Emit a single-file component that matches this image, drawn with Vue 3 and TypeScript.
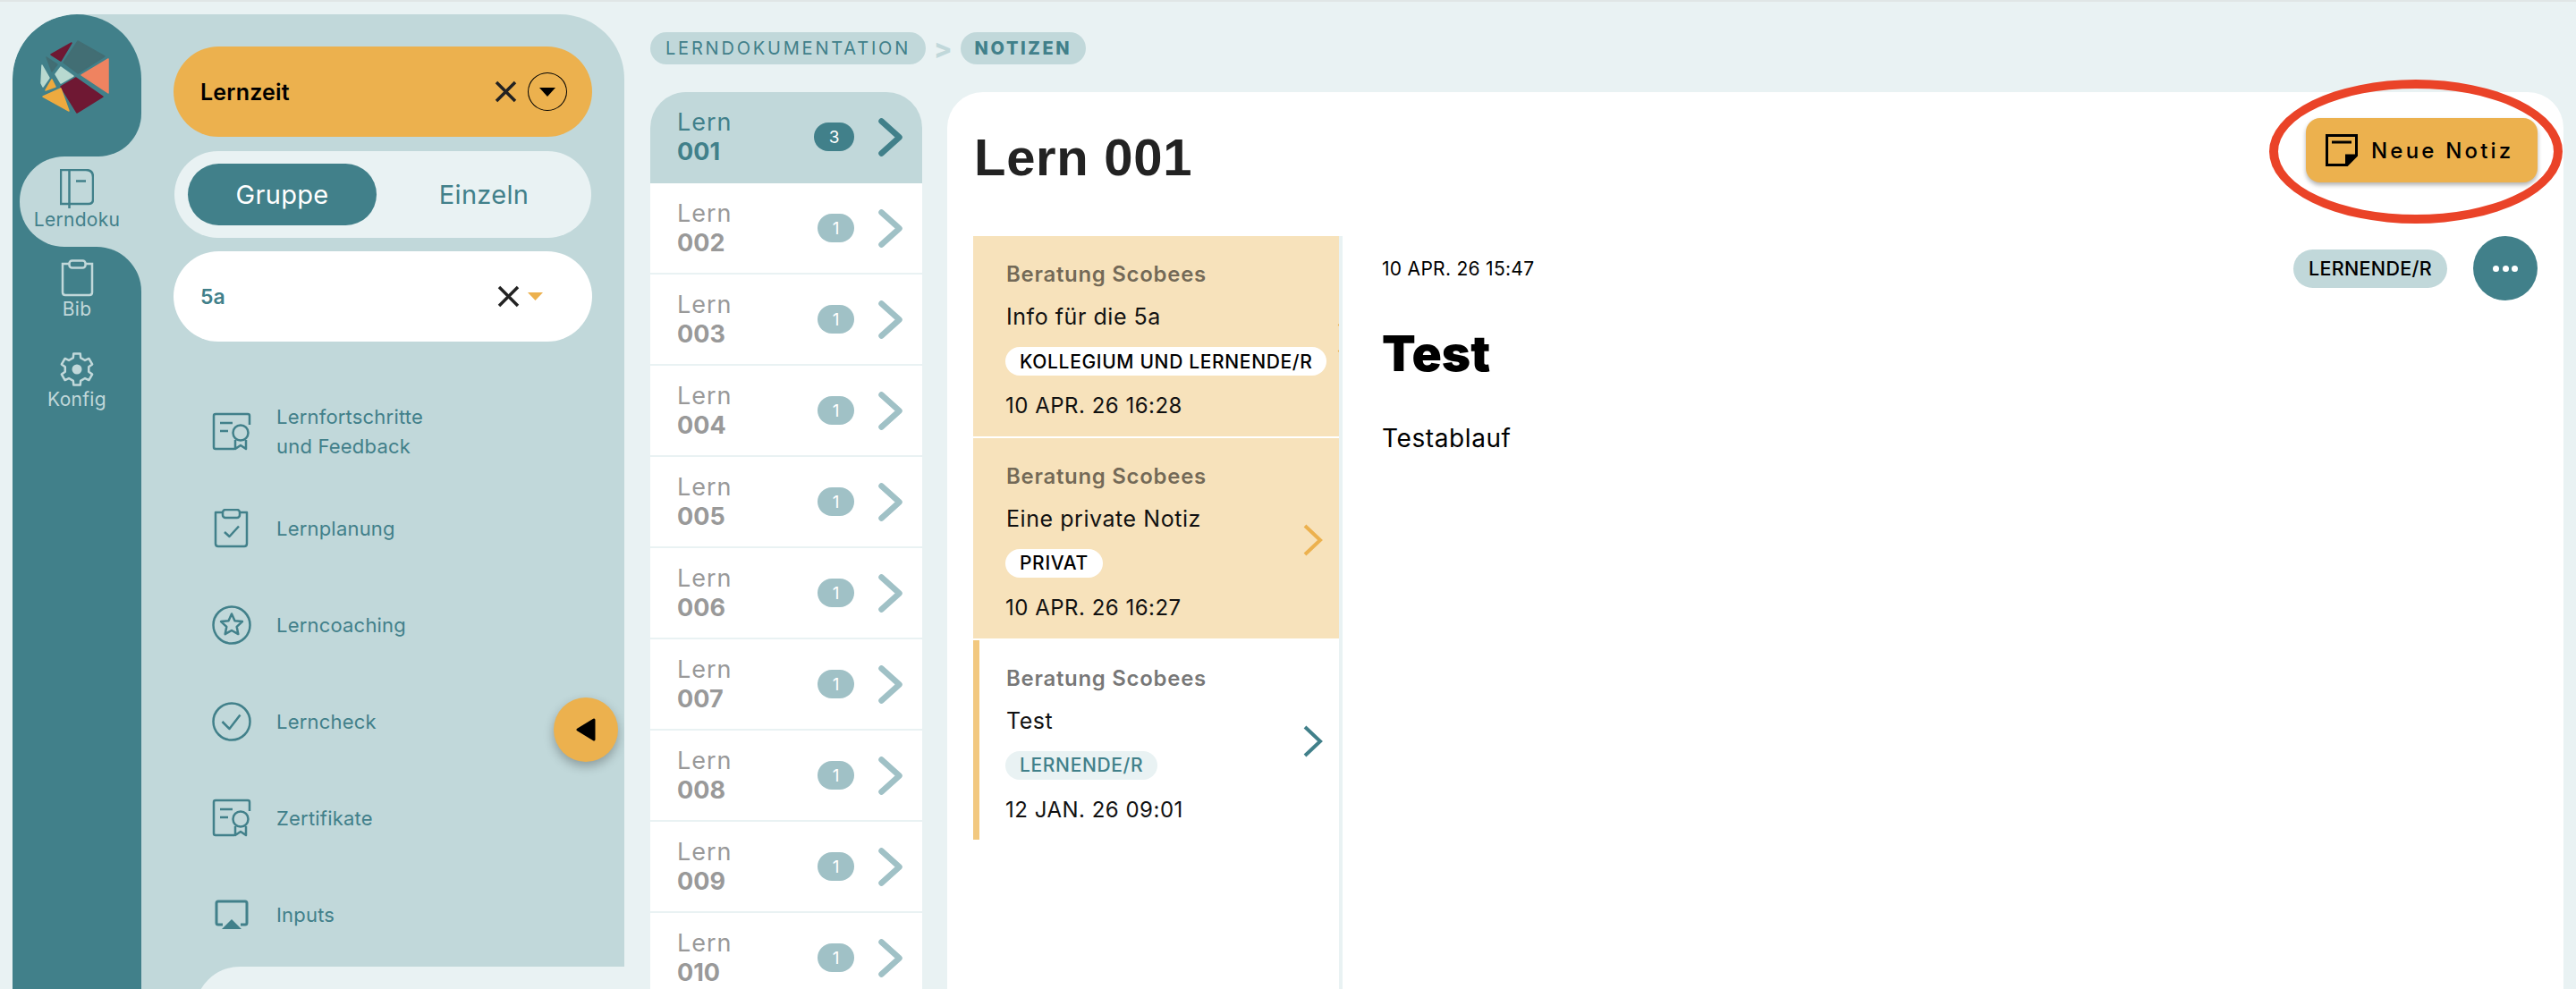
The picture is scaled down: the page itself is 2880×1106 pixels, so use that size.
<script setup lang="ts">
const navItems = [
  { label: ['Lernfortschritte', 'und Feedback'], icon: 'cert' },
  { label: ['Lernplanung'], icon: 'clip' },
  { label: ['Lerncoaching'], icon: 'star' },
  { label: ['Lerncheck'], icon: 'check' },
  { label: ['Zertifikate'], icon: 'cert' },
  { label: ['Inputs'], icon: 'air' },
]
const lessons = ['001', '002', '003', '004', '005', '006', '007', '008', '009', '010'].map((n, i) => ({
  n,
  count: i === 0 ? 3 : 1,
  active: i === 0,
}))
const notes = [
  { title: 'Info für die 5a', tag: 'KOLLEGIUM UND LERNENDE/R', date: '10 APR. 26 16:28', kind: 'warm' },
  { title: 'Eine private Notiz', tag: 'PRIVAT', date: '10 APR. 26 16:27', kind: 'warm' },
  { title: 'Test', tag: 'LERNENDE/R', date: '12 JAN. 26 09:01', kind: 'plain' },
]
function gearPath(cx: number, cy: number, ro: number, ri: number, teeth: number): string {
  const pts: string[] = []
  const step = (Math.PI * 2) / teeth
  for (let i = 0; i < teeth; i++) {
    const a = -Math.PI / 2 + i * step
    const w = step * 0.2
    const v = step * 0.3
    const p: [number, number][] = [
      [a - v, ri], [a - w, ro], [a + w, ro], [a + v, ri],
    ]
    for (const [t, r] of p) pts.push(`${(cx + r * Math.cos(t)).toFixed(2)} ${(cy + r * Math.sin(t)).toFixed(2)}`)
  }
  return 'M' + pts.join(' L') + ' Z'
}
const gear = gearPath(19, 19, 18, 13.5, 6)
</script>

<template>
  <div class="page">
    <aside class="panel">
      <div class="rail">
        <div class="logo-cell">
          <div class="logo-block">
            <svg class="logo" viewBox="40 40 90 92" width="90" height="92">
              <g stroke-linejoin="round" stroke-width="1.5">
                <polygon points="87,46 117,63 87,82 71,70" fill="#426e74" stroke="#426e74" />
                <polygon points="121,66 121,104 91,84" fill="#ef8360" stroke="#ef8360" />
                <polygon points="85,87 115,108 86,126 68,97" fill="#6f1833" stroke="#6f1833" />
                <polygon points="80,48 68,68 57,61" fill="#6f1833" stroke="#6f1833" />
                <polygon points="52,64 64,72 58,80" fill="#426e74" stroke="#426e74" />
                <polygon points="68,75 82,85 68,93 62,83" fill="#b8d9d0" stroke="#b8d9d0" />
                <polygon points="47,73 55,87 48,97 46,93" fill="#b8d9d0" stroke="#b8d9d0" />
                <polygon points="58,89 62,97 51,101" fill="#eeaa3f" stroke="#eeaa3f" />
                <polygon points="68,99 77,124 48,108" fill="#eeaa3f" stroke="#eeaa3f" />
              </g>
            </svg>
          </div>
        </div>
        <div class="tab-cell">
          <div class="tab active">
            <svg width="38" height="44" viewBox="0 0 38 44" fill="none" stroke="#41808a" stroke-width="2.5">
              <path d="M1 1 H29 Q37 1 37 9 V34 Q37 39 32 39 H1 Z" />
              <path d="M10.5 1 V44" />
              <path d="M18 13.5 H29" />
            </svg>
            <span>Lerndoku</span>
          </div>
        </div>
        <div class="rail-rest">
          <div class="tab">
            <svg width="37" height="42" viewBox="0 0 37 42" fill="none" stroke="#c1d8da" stroke-width="2.5">
              <path d="M9 5 H2 V37 Q2 40 5 40 H32 Q35 40 35 37 V5 H28" />
              <rect x="9.5" y="1.5" width="18" height="8" rx="3" />
            </svg>
            <span>Bib</span>
          </div>
          <div class="tab">
            <svg width="38" height="38" viewBox="0 0 38 38" fill="none" stroke="#c1d8da" stroke-width="2.5" stroke-linejoin="round">
              <path :d="gear" />
              <circle cx="19" cy="19" r="5.5" fill="#c1d8da" stroke="none" />
            </svg>
            <span>Konfig</span>
          </div>
        </div>
      </div>

      <div class="side">
        <div class="controls">
          <div class="select select-orange">
            <span class="select-label">Lernzeit</span>
            <svg class="x" width="25" height="25" viewBox="0 0 25 25"><path d="M2 2 L23 23 M23 2 L2 23" stroke="#222" stroke-width="3.5" /></svg>
            <span class="circle-btn">
              <svg width="18" height="10" viewBox="0 0 18 10"><path d="M0 0 H18 L9 10 Z" fill="#000" /></svg>
            </span>
          </div>
          <div class="toggle">
            <span class="toggle-opt on">Gruppe</span>
            <span class="toggle-opt">Einzeln</span>
          </div>
          <div class="select select-white">
            <span class="select-label teal">5a</span>
            <svg class="x" width="25" height="25" viewBox="0 0 25 25"><path d="M2 2 L23 23 M23 2 L2 23" stroke="#222" stroke-width="3.5" /></svg>
            <svg class="caret" width="17" height="9" viewBox="0 0 17 9"><path d="M0 0 H17 L8.5 9 Z" fill="#ecb14e" /></svg>
          </div>
        </div>

        <nav class="nav">
          <div v-for="item in navItems" :key="item.label[0]" class="nav-row">
            <svg class="nav-icon" width="44" height="44" viewBox="0 0 44 44" fill="none" stroke="#41808a" stroke-width="2.5" stroke-linejoin="round">
              <template v-if="item.icon === 'cert'">
                <path d="M42 14 V4 Q42 2 40 2 H4 Q2 2 2 4 V39 Q2 41 4 41 H25" />
                <path d="M9 12 H23 M9 21 H18" />
                <circle cx="32" cy="23" r="8.5" />
                <path d="M26 31 V41 L32 37 L38 41 V31" />
              </template>
              <template v-else-if="item.icon === 'clip'">
                <path d="M12 4 H4 V39 Q4 42 7 42 H36 Q39 42 39 39 V4 H31" />
                <rect x="12" y="1" width="19" height="9" rx="3" />
                <path d="M14 26 L19.5 31 L30 19.5" />
              </template>
              <template v-else-if="item.icon === 'star'">
                <circle cx="22" cy="22" r="20.5" />
                <polygon points="22,9.5 25.5,17.2 33.9,18.1 27.7,23.9 29.3,32.1 22,28 14.7,32.1 16.3,23.9 10.1,18.1 18.5,17.2" />
              </template>
              <template v-else-if="item.icon === 'check'">
                <circle cx="22" cy="22" r="20.5" />
                <path d="M11.5 22 L19.5 30 L31.5 14.5" />
              </template>
              <template v-else>
                <path d="M12 33 H7 Q5 33 5 31 V9 Q5 7 7 7 H37 Q39 7 39 9 V31 Q39 33 37 33 H32" stroke-width="3" />
                <path d="M11 38 L22 27 L33 38 Z" fill="#41808a" stroke="none" />
              </template>
            </svg>
            <span class="nav-text"><span v-for="l in item.label" :key="l" class="nav-line">{{ l }}</span></span>
          </div>
        </nav>
        <div class="subpanel"></div>
      </div>

      <button class="collapse" type="button">
        <svg width="22" height="26" viewBox="0 0 22 26"><path d="M20 2 V24 L2 13 Z" fill="#000" stroke="#000" stroke-width="3" stroke-linejoin="round" /></svg>
      </button>
    </aside>

    <main class="main">
      <div class="crumbs">
        <span class="crumb">LERNDOKUMENTATION</span>
        <span class="crumb-sep">&gt;</span>
        <span class="crumb strong">NOTIZEN</span>
      </div>
      <div class="columns">
        <div class="lessons">
          <div v-for="l in lessons" :key="l.n" class="lesson" :class="{ active: l.active }">
            <div class="lesson-name">
              <span>Lern</span>
              <strong>{{ l.n }}</strong>
            </div>
            <span class="badge">{{ l.count }}</span>
            <svg class="lesson-chev" width="27" height="43" viewBox="0 0 27 43" fill="none" stroke-width="6.5" stroke-linecap="round" stroke-linejoin="round">
              <path d="M3.5 3.5 L23.5 21.5 L3.5 39.5" />
            </svg>
          </div>
        </div>

        <section class="content">
          <header class="content-head">
            <h1>Lern 001</h1>
            <button class="new-note" type="button">
              <svg width="36" height="36" viewBox="0 0 36 36" fill="none" stroke="#000" stroke-width="3">
                <path d="M1.5 1.5 H34.5 V24 L24 34.5 H1.5 Z" />
                <path d="M7 9 H29" />
                <path d="M23.5 34 V24 H34" />
                <path d="M24 34 L33 25 H25 Z" fill="#000" stroke="none" />
              </svg>
              <span>Neue Notiz</span>
            </button>
            <span class="ring"></span>
          </header>
          <div class="content-body">
            <div class="notes">
              <article v-for="n in notes" :key="n.title" class="note" :class="n.kind">
                <div class="note-text">
                  <div class="note-author">Beratung Scobees</div>
                  <div class="note-title">{{ n.title }}</div>
                  <span class="note-tag">{{ n.tag }}</span>
                  <div class="note-date">{{ n.date }}</div>
                </div>
                <svg class="note-chev" width="22" height="36" viewBox="0 0 22 36" fill="none" stroke-width="4">
                  <path d="M2 2 L19 18 L2 34" />
                </svg>
              </article>
            </div>
            <div class="detail">
              <div class="detail-top">
                <span class="detail-date">10 APR. 26 15:47</span>
                <span class="detail-tag">LERNENDE/R</span>
                <span class="more"><i></i><i></i><i></i></span>
              </div>
              <h2>Test</h2>
              <p>Testablauf</p>
            </div>
          </div>
        </section>
      </div>
    </main>
  </div>
</template>

<style>
html, body { margin: 0; background: #e9f2f3; }
</style>

<style scoped>
.page {
  box-sizing: border-box;
  width: 2880px;
  height: 1106px;
  overflow: hidden;
  display: flex;
  background: #e9f2f3;
  border-top: 2px solid #e0e6e6;
  padding: 14px 14px 0;
  font-family: Inter, "Liberation Sans", sans-serif;
  color: #000;
}
.panel {
  position: relative;
  flex: none;
  width: 684px;
  height: 1200px;
  display: flex;
  background: #c1d8da;
  border-radius: 72px 72px 0 0;
  overflow: hidden;
}
.rail { flex: none; width: 144px; display: flex; flex-direction: column; }
.logo-block {
  height: 159px;
  background: #41808a;
  border-radius: 72px 72px 48px 0;
  display: flex;
  justify-content: center;
  padding-top: 24px;
  box-sizing: border-box;
}
.logo { margin-left: -2px; }
.tab-cell { background: #41808a; }
.tab {
  height: 118px;
  display: flex;
  flex-direction: column;
  align-items: center;
  color: #c1d8da;
  font-size: 21px;
  line-height: 26px;
  letter-spacing: 0.3px;
}
.tab span { margin-top: 2px; }
.tab.active {
  height: 101px;
  margin-left: 8px;
  padding-top: 14px;
  box-sizing: border-box;
  background: #c1d8da;
  color: #41808a;
  border-radius: 50px 0 0 50px;
  padding-right: 8px;
}
.tab.active span { margin-top: 0; }
.rail-rest {
  flex: 1;
  background: #41808a;
  border-radius: 0 50px 0 0;
  padding-top: 14px;
}
.rail-rest .tab { height: 104px; }
.rail-rest .tab:first-child span { margin-top: 1px; }
.side { flex: 1; display: flex; flex-direction: column; min-width: 0; }
.controls {
  padding: 36px 36px 0;
  display: flex;
  flex-direction: column;
  gap: 15.5px;
}
.select {
  height: 101px;
  border-radius: 51px;
  display: flex;
  align-items: center;
  padding-left: 30px;
  box-sizing: border-box;
}
.select-orange { background: #ecb14e; }
.select-white { background: #fff; }
.select-label { font-size: 25px; letter-spacing: 0.2px; font-weight: 600; flex: 1; }
.select-label.teal { color: #41808a; font-size: 23px; letter-spacing: 0; }
.select-orange .x { margin-right: 12px; }
.select-white .x { margin-right: 9px; }
.select-white .caret { margin-right: 55px; }
.circle-btn {
  width: 44px;
  height: 43px;
  border: 1.5px solid #000;
  border-radius: 50%;
  box-sizing: border-box;
  display: flex;
  align-items: center;
  justify-content: center;
  margin-right: 28px;
}
.toggle {
  height: 97px;
  margin: 0 1px;
  background: #e9f2f3;
  border-radius: 49px;
  padding: 14px 0 14px 15px;
  box-sizing: border-box;
  display: flex;
}
.toggle-opt {
  flex: 1;
  display: flex;
  align-items: center;
  justify-content: center;
  border-radius: 35px;
  color: #41808a;
  font-size: 29px;
  letter-spacing: 0.3px;
}
.toggle-opt.on { flex: none; width: 211px; background: #41808a; color: #fff; }
.nav { margin-top: 47px; padding-left: 79px; }
.nav-row { height: 108px; display: flex; align-items: center; gap: 28px; }
.nav-icon { flex: none; }
.nav-text { color: #41808a; font-size: 22px; letter-spacing: 0.2px; line-height: 33px; display: flex; flex-direction: column; }
.subpanel {
  flex: none;
  height: 100px;
  margin: 4px 0 0 60px;
  background: #e9f2f3;
  border-radius: 50px 0 0 0;
}
.collapse {
  position: absolute;
  left: 605px;
  top: 764px;
  width: 72px;
  height: 72px;
  border: 0;
  padding: 0;
  border-radius: 50%;
  background: #ecb14e;
  box-shadow: 0 5px 12px rgba(0, 0, 0, 0.28);
  display: flex;
  align-items: center;
  justify-content: center;
}
.main { flex: 1; min-width: 0; margin-left: 29px; display: flex; flex-direction: column; }
.crumbs { display: flex; align-items: center; height: 36px; margin-top: 20px; }
.crumb {
  height: 36px;
  border-radius: 18px;
  background: #c1d8da;
  color: #41808a;
  padding: 0 17px;
  display: flex;
  align-items: center;
  font-size: 20px;
  letter-spacing: 2.8px;
}
.crumb.strong { font-weight: 800; letter-spacing: 2.6px; padding: 0 16px; }
.crumb-sep { color: #c1d8da; font-weight: 800; font-size: 30px; margin: 0 9px; }
.columns { display: flex; gap: 28px; margin-top: 31px; flex: 1; min-height: 0; }
.lessons { flex: none; width: 304px; }
.lesson {
  height: 102px;
  box-sizing: border-box;
  background: #fff;
  border-bottom: 2px solid #e9f2f3;
  display: flex;
  align-items: center;
  padding: 0 22px 0 30px;
  color: #999;
}
.lesson.active {
  background: #c1d8da;
  border-bottom-color: #c1d8da;
  border-radius: 40px 40px 0 0;
  color: #41808a;
}
.lesson-name { flex: 1; display: flex; flex-direction: column; font-size: 27px; line-height: 34px; padding-top: 1px; }
.lesson-name span { letter-spacing: 1px; }
.lesson-name strong { font-weight: 700; margin-top: -1px; }
.badge {
  min-width: 41px;
  height: 32px;
  border-radius: 16px;
  background: #a0c1c6;
  color: #fff;
  font-size: 19px;
  display: flex;
  align-items: center;
  justify-content: center;
  margin-right: 27px;
}
.lesson.active .badge { min-width: 45px; background: #41808a; }
.lesson-chev { stroke: #a0c1c6; }
.lesson.active .lesson-chev { stroke: #41808a; }
.content {
  flex: 1;
  min-width: 0;
  background: #fff;
  border-radius: 40px 40px 0 0;
  display: flex;
  flex-direction: column;
  position: relative;
}
.content-head {
  position: relative;
  flex: none;
  height: 161px;
  display: flex;
  justify-content: space-between;
  align-items: flex-start;
  padding: 29px 29px 0 30px;
  box-sizing: border-box;
}
h1 {
  margin: 8px 0 0;
  font-family: "Liberation Sans", sans-serif;
  font-weight: 700;
  font-size: 58px;
  letter-spacing: 0.7px;
  line-height: 72px;
  color: #222;
}
.new-note {
  width: 259px;
  height: 72px;
  border: 0;
  border-radius: 16px;
  background: #ecb14e;
  box-shadow: 0 3px 5px rgba(0, 0, 0, 0.3);
  display: flex;
  align-items: center;
  gap: 15px;
  padding: 0 0 0 22px;
  box-sizing: border-box;
  font-family: inherit;
  font-size: 24px;
  font-weight: 500;
  letter-spacing: 3.2px;
  color: #000;
}
.ring {
  position: absolute;
  left: 1478px;
  top: -14px;
  width: 328px;
  height: 161px;
  box-sizing: border-box;
  border: 10px solid #ea4328;
  border-radius: 50%;
  pointer-events: none;
}
.content-body { flex: 1; display: flex; min-height: 0; padding-left: 29px; }
.notes {
  flex: none;
  width: 413px;
  box-sizing: border-box;
  border-right: 4px solid #e9f2f3;
  display: flex;
  flex-direction: column;
  gap: 2px;
}
.note {
  height: 223.75px;
  box-sizing: border-box;
  border-left: 7px solid #f7e2bb;
  background: #f7e2bb;
  padding-left: 29px;
  display: flex;
  align-items: center;
  gap: 12px;
  overflow: hidden;
}
.note.plain { background: #fff; border-left-color: #f2c87f; }
.note-text { flex: none; align-self: flex-start; padding-top: 30px; display: flex; flex-direction: column; align-items: flex-start; }
.note-author { font-size: 24px; letter-spacing: 0.7px; line-height: 26px; font-weight: 600; color: rgba(0, 0, 0, 0.55); margin-left: 1px; }
.note-title { font-size: 25px; letter-spacing: 0.55px; line-height: 26px; margin-top: 21px; color: #111; margin-left: 1px; }
.note-tag {
  margin-top: 21px;
  height: 32px;
  padding: 0 16px;
  border-radius: 16px;
  background: #fff;
  display: flex;
  align-items: center;
  font-size: 21px;
  letter-spacing: 0.65px;
  font-weight: 500;
  color: #000;
}
.plain .note-tag { background: #e9f2f3; color: #41808a; }
.note-date { margin-top: 21px; font-size: 24px; letter-spacing: 0.5px; line-height: 26px; color: #111; }
.note-chev { flex: none; margin: 4px 18px 0 auto; stroke: #ecb14e; }
.plain .note-chev { stroke: #41808a; }
.detail { flex: 1; min-width: 0; padding: 0 29px 0 44px; }
.detail-top { height: 72px; display: flex; align-items: center; }
.detail-date { flex: 1; font-size: 21px; letter-spacing: 0.3px; }
.detail-tag {
  height: 43px;
  padding: 0 17px;
  border-radius: 22px;
  background: #c1d8da;
  display: flex;
  align-items: center;
  font-size: 21.5px;
  letter-spacing: 0.3px;
  font-weight: 500;
  margin-right: 29px;
}
.more {
  width: 72px;
  height: 72px;
  border-radius: 50%;
  background: #41808a;
  display: flex;
  align-items: center;
  justify-content: center;
  gap: 3.5px;
}
.more i { width: 7px; height: 7px; border-radius: 50%; background: #fff; }
h2 { margin: 29px 0 0; font-size: 55px; line-height: 60px; font-weight: 900; }
p { margin: 50px 0 0; font-size: 28px; letter-spacing: 0.6px; line-height: 30px; }
</style>
